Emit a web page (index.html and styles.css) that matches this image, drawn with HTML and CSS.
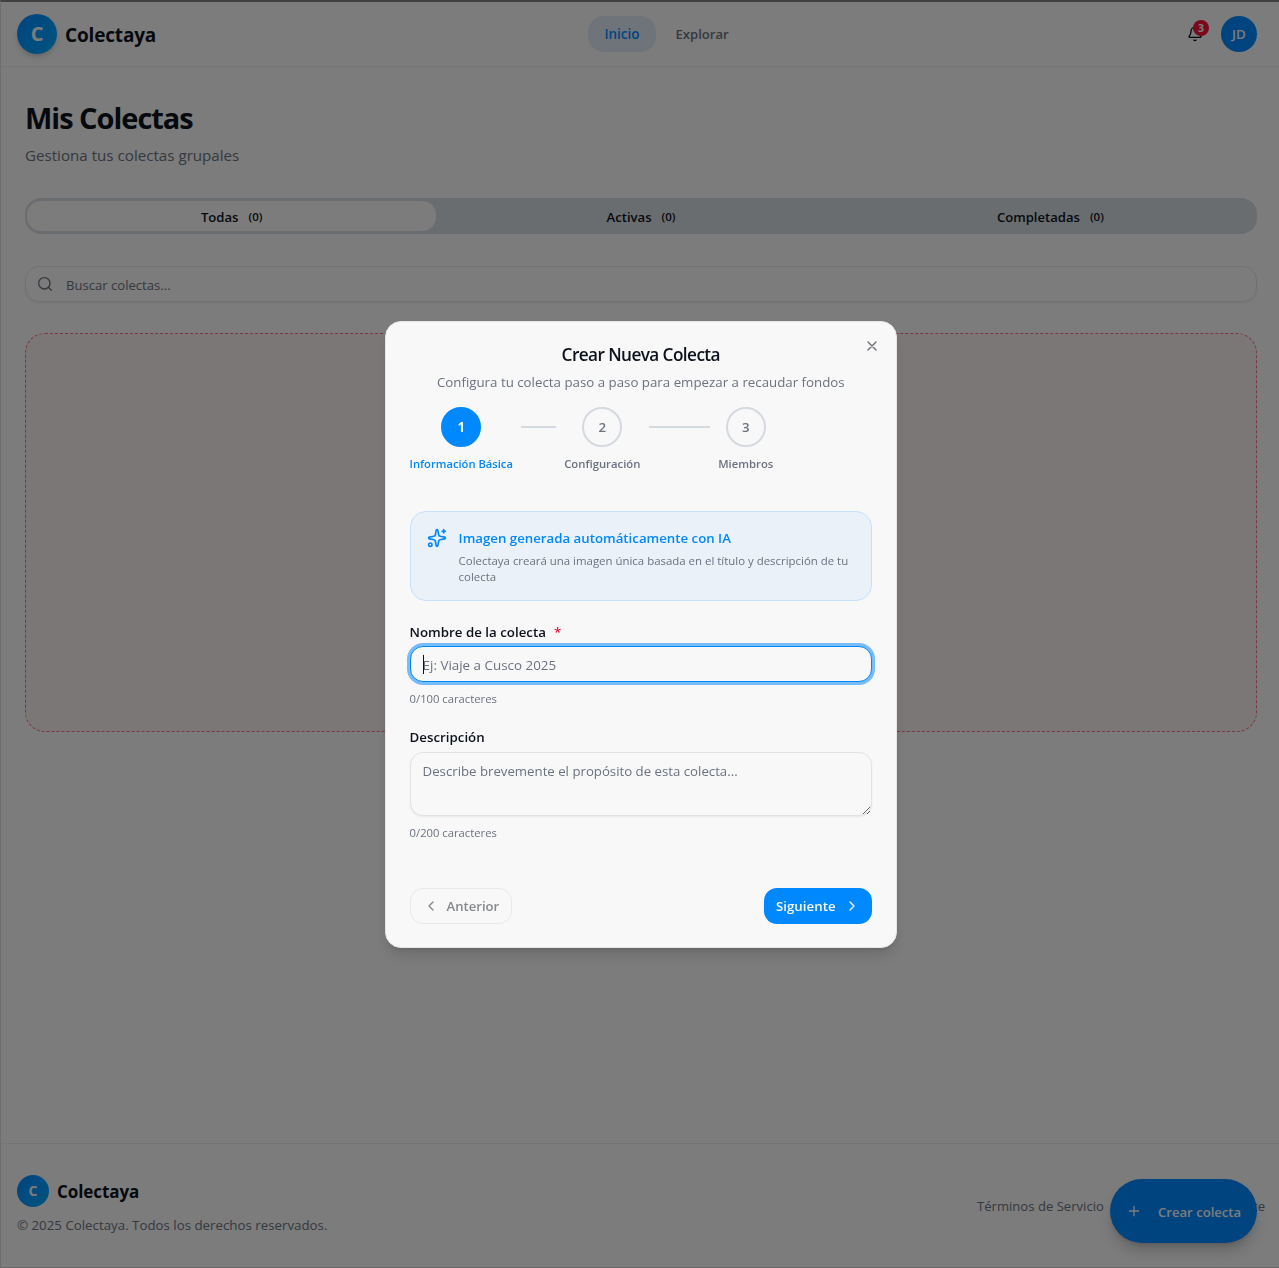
FILE: index.html
```html
<!DOCTYPE html>
<html lang="es">
<head>
<meta charset="utf-8">
<title>Colectaya</title>
<link rel="stylesheet" href="styles.css">
</head>
<body>
<div class="page">
  <header class="topbar">
    <div class="brand"><span class="logo">C</span><span class="brand-name">Colectaya</span></div>
    <nav class="nav"><a class="nav-link active">Inicio</a><a class="nav-link">Explorar</a></nav>
    <div class="user">
      <div class="bell">
        <svg width="16" height="16" viewBox="0 0 24 24" class="icon"><path d="M10.268 21a2 2 0 0 0 3.464 0"/><path d="M3.262 15.326A1 1 0 0 0 4 17h16a1 1 0 0 0 .74-1.673C19.41 13.956 18 12.499 18 8A6 6 0 0 0 6 8c0 4.499-1.411 5.956-2.738 7.326"/></svg>
        <span class="badge">3</span>
      </div>
      <span class="avatar">JD</span>
    </div>
  </header>
  <main class="main">
    <h1 class="title">Mis Colectas</h1>
    <p class="subtitle">Gestiona tus colectas grupales</p>
    <div class="tabs">
      <div class="tab selected"><span class="tab-name">Todas</span><span class="count">(0)</span></div>
      <div class="tab"><span class="tab-name">Activas</span><span class="count">(0)</span></div>
      <div class="tab"><span class="tab-name">Completadas</span><span class="count">(0)</span></div>
    </div>
    <div class="search">
      <svg width="16" height="16" viewBox="0 0 24 24" class="icon"><circle cx="11" cy="11" r="8.5"/><path d="m21.5 21.5-4.5-4.5"/></svg>
      <span class="search-text">Buscar colectas...</span>
    </div>
    <div class="empty"></div>
  </main>
  <footer class="footer">
    <div>
      <div class="brand"><span class="logo small">C</span><span class="brand-name small">Colectaya</span></div>
      <p class="copyright">© 2025 Colectaya. Todos los derechos reservados.</p>
    </div>
    <div class="links"><span>Términos de Servicio</span><span>Soporte</span></div>
  </footer>
  <div class="fab">
    <svg width="16" height="16" viewBox="0 0 24 24" class="icon"><path d="M5 12h14M12 5v14"/></svg>
    <span class="fab-text">Crear colecta</span>
  </div>
</div>
<div class="overlay">
  <section class="dialog">
    <svg class="icon close" width="16" height="16" viewBox="0 0 24 24"><path d="M18 6 6 18M6 6l12 12"/></svg>
    <h2 class="dialog-title">Crear Nueva Colecta</h2>
    <p class="dialog-desc">Configura tu colecta paso a paso para empezar a recaudar fondos</p>
    <div class="steps">
      <div class="step current s1"><span class="dot">1</span><span class="step-name">Información Básica</span></div>
      <i class="line l1"></i>
      <div class="step s2"><span class="dot">2</span><span class="step-name">Configuración</span></div>
      <i class="line l2"></i>
      <div class="step s3"><span class="dot">3</span><span class="step-name">Miembros</span></div>
    </div>
    <div class="notice">
      <svg class="icon sparkle" width="20" height="20" viewBox="0 0 24 24"><path d="M11.017 2.814a1 1 0 0 1 1.966 0l1.051 5.558a2 2 0 0 0 1.594 1.594l5.558 1.051a1 1 0 0 1 0 1.966l-5.558 1.051a2 2 0 0 0-1.594 1.594l-1.051 5.558a1 1 0 0 1-1.966 0l-1.051-5.558a2 2 0 0 0-1.594-1.594l-5.558-1.051a1 1 0 0 1 0-1.966l5.558-1.051a2 2 0 0 0 1.594-1.594z"/><path d="M20 2v4M22 4h-4"/><circle cx="4" cy="20" r="2"/></svg>
      <div>
        <p class="notice-title">Imagen generada automáticamente con IA</p>
        <p class="notice-text">Colectaya creará una imagen única basada en el título y descripción de tu<br>colecta</p>
      </div>
    </div>
    <label class="label"><span>Nombre de la colecta</span><b class="req">*</b></label>
    <div class="field"><input class="input" placeholder="Ej: Viaje a Cusco 2025"><i class="caret"></i></div>
    <p class="hint">0/100 caracteres</p>
    <label class="label second"><span>Descripción</span></label>
    <textarea class="area" placeholder="Describe brevemente el propósito de esta colecta..."></textarea>
    <p class="hint">0/200 caracteres</p>
    <div class="actions">
      <div class="btn prev"><svg width="16" height="16" viewBox="0 0 24 24" class="icon"><path d="m15 18-6-6 6-6"/></svg><span>Anterior</span></div>
      <div class="btn next"><span>Siguiente</span><svg width="16" height="16" viewBox="0 0 24 24" class="icon"><path d="m9 18 6-6-6-6"/></svg></div>
    </div>
  </section>
</div>
</body>
</html>
```
FILE: styles.css
```css
* { box-sizing: border-box; margin: 0; padding: 0; }
body { font-family: "Open Sans", "Noto Sans", sans-serif; font-size: 13.3px; line-height: 20px; color: #0c121c; background: #f8f8f8; overflow: hidden; }
span, p, h1, h2 { white-space: nowrap; }
.icon { fill: none; stroke: currentColor; stroke-width: 2; stroke-linecap: round; stroke-linejoin: round; flex: none; display: block; }
.page { height: 1268px; display: flex; flex-direction: column; border-top: 2px solid #808080; border-left: 1px solid #dcdcdc; border-bottom: 1px solid #d0d0d0; position: relative; }

.topbar { height: 65px; border-bottom: 1px solid #ebebeb; display: flex; justify-content: space-between; align-items: center; padding: 0 22px 0 16px; }
.brand { display: flex; align-items: center; gap: 8px; }
.logo { width: 40px; height: 40px; border-radius: 50%; background: linear-gradient(135deg, #0088ff, #00aaff); color: #f8f8f8; font-size: 20px; font-weight: 700; display: flex; align-items: center; justify-content: center; box-shadow: 0 4px 6px -1px #0002, 0 2px 4px -2px #0002; }
.logo.small { width: 32px; height: 32px; font-size: 14px; box-shadow: none; }
.brand-name { font-size: 19px; line-height: 28px; font-weight: 700; letter-spacing: -0.17px; padding-top: 2px; }
.brand-name.small { font-size: 17px; letter-spacing: -0.08px; }
.nav { display: flex; gap: 4px; font-size: 13.1px; font-weight: 600; color: #6b7280; }
.nav-link { height: 36px; padding: 8px 16px; border-radius: 16px; }
.nav-link.active { color: #0088ff; background: #dde9f5; font-size: 13.5px; }
.user { display: flex; align-items: center; gap: 8px; }
.bell { position: relative; width: 36px; padding: 10px; }
.badge { position: absolute; left: 16px; top: 4px; width: 16px; height: 16px; border-radius: 50%; background: #f5123d; color: #f8f8f8; font-size: 10.5px; line-height: 16px; font-weight: 700; text-align: center; }
.avatar { width: 36px; height: 36px; border-radius: 50%; background: #0088ff; color: #f8f8f8; font-weight: 600; line-height: 36px; text-align: center; }

.main { flex: 1; padding: 33px 22px 0 24px; }
.title { font-size: 29px; line-height: 36px; font-weight: 700; letter-spacing: -1.02px; }
.subtitle { font-size: 15.15px; line-height: 24px; margin-top: 7px; color: #6b7280; }
.tabs { margin-top: 31px; height: 36px; padding: 3px 2px; border-radius: 16px; background: #d4dae0; display: grid; grid-template-columns: repeat(3, 1fr); }
.tab { display: flex; align-items: center; justify-content: center; gap: 10px; padding-top: 1px; border-radius: 14px; font-size: 13.1px; font-weight: 600; }
.tab.selected { background: #f8f8f8; }
.count { font-size: 11.5px; padding-top: 1px; }
.search { margin-top: 32px; height: 36px; border: 1px solid #e3e3e3; border-radius: 14px; padding: 0 11px; display: flex; align-items: center; gap: 13px; color: #6b7280; font-size: 13.1px; box-shadow: 0 1px 2px #0001; }
.search-text { padding-top: 2px; }
.empty { margin-top: 31px; height: 399px; border: 1px dashed #f86c86; border-radius: 20px; background: #f6eeec; }

.footer { height: 124px; border-top: 1px solid #ebebeb; padding: 31px 14px 0 16px; display: flex; justify-content: space-between; }
.copyright { margin-top: 8px; color: #6b7280; }
.links { display: flex; justify-content: space-between; width: 288px; padding-top: 21px; color: #6b7280; font-size: 13.1px; }
.fab { position: absolute; right: 22px; bottom: 24px; width: 147px; height: 64px; border-radius: 32px; background: #0088ff; color: #f8f8f8; display: flex; align-items: center; gap: 16px; padding-left: 16px; font-size: 13.1px; font-weight: 600; box-shadow: 0 10px 15px -3px #0003, 0 4px 6px -4px #0003; }
.fab-text { padding-top: 1px; }

.overlay { position: fixed; inset: 0; background: rgba(0, 0, 0, 0.5); display: flex; align-items: flex-start; padding: 321px 0 0 384.6px; }
.dialog { position: relative; width: 512.4px; height: 627px; border-radius: 16px; background: #f8f8f8; border: 1px solid #e6e6e6; padding: 23px 24px; box-shadow: 0 10px 15px -3px #0002, 0 4px 6px -4px #0002; }
.close { position: absolute; right: 16px; top: 16px; color: #6a6d72; }
.dialog-title { font-size: 17.2px; line-height: 20px; font-weight: 600; text-align: center; letter-spacing: -0.58px; }
.dialog-desc { margin-top: 7px; text-align: center; color: #6b7280; }
.steps { margin-top: 15px; display: flex; gap: 8px; height: 64px; }
.step { display: flex; flex-direction: column; align-items: center; gap: 9px; font-size: 11.3px; line-height: 16px; font-weight: 600; color: #6b7280; }
.s1 { width: 103.2px; font-size: 11.2px; }
.s2 { width: 77px; }
.s3 { width: 56px; }
.dot { width: 40px; height: 40px; border: 2px solid #d5dae0; border-radius: 50%; font-size: 13.3px; line-height: 37px; text-align: center; }
.current { color: #0088ff; }
.current .dot { background: #0088ff; border-color: #0088ff; color: #f8f8f8; font-weight: 700; }
.line { height: 2px; margin-top: 19px; background: #d5dae0; }
.l1 { width: 35px; }
.l2 { width: 61px; }
.notice { margin-top: 40px; height: 90px; border: 1px solid #c5e1fb; border-radius: 16px; background: #eaf1f9; padding: 16px; display: flex; gap: 12px; }
.sparkle { color: #0088ff; }
.notice-title { color: #0088ff; font-size: 13.25px; font-weight: 600; }
.notice-text { margin-top: 5px; font-size: 11.43px; line-height: 16px; color: #6b7280; }
.label { margin-top: 21px; display: flex; gap: 8px; font-weight: 600; }
.req { color: #f5123d; font-weight: 600; }
.field { position: relative; margin-top: 4px; }
.input { display: block; width: 100%; height: 36px; border: 1px solid #0088ff; border-radius: 13px; padding: 1px 12px 0; outline: 0; background: #f8f8f8; font: inherit; font-size: 13.4px; box-shadow: 0 0 0 3px #78bcfc; }
.caret { position: absolute; left: 13px; top: 9px; width: 1px; height: 19px; background: #0c121c; }
.input::placeholder, .area::placeholder { color: #6b7280; opacity: 1; }
.hint { margin-top: 9px; font-size: 11.25px; line-height: 16px; color: #6b7280; }
.second { margin-top: 20px; }
.area { display: block; width: 100%; height: 64px; margin-top: 5px; border: 1px solid #e1e3e5; border-radius: 13px; padding: 8px 12px; background: #f8f8f8; font: inherit; font-size: 13.23px; resize: vertical; box-shadow: 0 1px 2px #0001; }
.actions { margin-top: 47px; display: flex; justify-content: space-between; }
.btn { height: 36px; border-radius: 13px; display: flex; align-items: center; font-weight: 600; }
.prev { width: 102.4px; border: 1px solid #e9e9e9; padding-left: 12px; gap: 8px; color: #85888c; font-size: 13.1px; }
.next { width: 108px; justify-content: space-between; padding: 0 12px; background: #0088ff; color: #f8f8f8; }
```
